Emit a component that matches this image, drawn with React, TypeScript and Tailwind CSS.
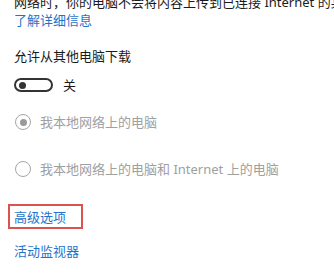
import React from 'react';

/* Windows 10 settings — delivery optimization fragment */

const font = { fontFamily: '"Noto Sans", "Noto Sans CJK SC", sans-serif' };

function Radio({ checked, label }: { checked?: boolean; label: string }) {
  return (
    <div className="flex h-[20px] items-center">
      <span className="ml-[1px] flex h-[16px] w-[16px] items-center justify-center rounded-full border-[1.5px] border-[#a6a6a6]">
        {checked && <span className="h-[7px] w-[7px] rounded-full bg-[#9a9a9a]" />}
      </span>
      <span className="ml-[9px] text-[13px] leading-[20px] text-[#a0a0a0]">{label}</span>
    </div>
  );
}

export default function App() {
  return (
    <div className="h-[275px] w-[334px] overflow-hidden bg-white pl-[14px]" style={font}>
      <p className="mt-[-7px] whitespace-nowrap text-[13px] leading-[18px] text-[#1a1a1a]">
        网络时，你的电脑不会将内容上传到已连接 Internet 的某些电脑
      </p>
      <a className="block text-[13px] leading-[18px] text-[#1f74c9]">了解详细信息</a>

      <p className="mt-[17px] text-[13px] leading-[20px] text-[#1a1a1a]">允许从其他电脑下载</p>

      {/* toggle (off) */}
      <div className="mt-[12px] flex h-[14px] items-center">
        <span className="flex h-[14px] w-[39px] items-center rounded-full border-2 border-[#333] pl-[3px]">
          <span className="h-[7px] w-[7px] rounded-full bg-[#333]" />
        </span>
        <span className="ml-[10px] text-[13px] leading-[14px] text-[#1a1a1a]">关</span>
      </div>

      <div className="mt-[20px]">
        <Radio checked label="我本地网络上的电脑" />
      </div>
      <div className="mt-[27px]">
        <Radio label="我本地网络上的电脑和 Internet 上的电脑" />
      </div>

      <div className="ml-[-6px] mt-[25px] flex h-[25px] w-[75px] items-center border-2 border-[#d9534f] pl-[4px]">
        <a className="text-[13px] leading-[20px] text-[#1f74c9]">高级选项</a>
      </div>

      <a className="mt-[12px] block text-[13px] leading-[20px] text-[#1f74c9]">活动监视器</a>
    </div>
  );
}
